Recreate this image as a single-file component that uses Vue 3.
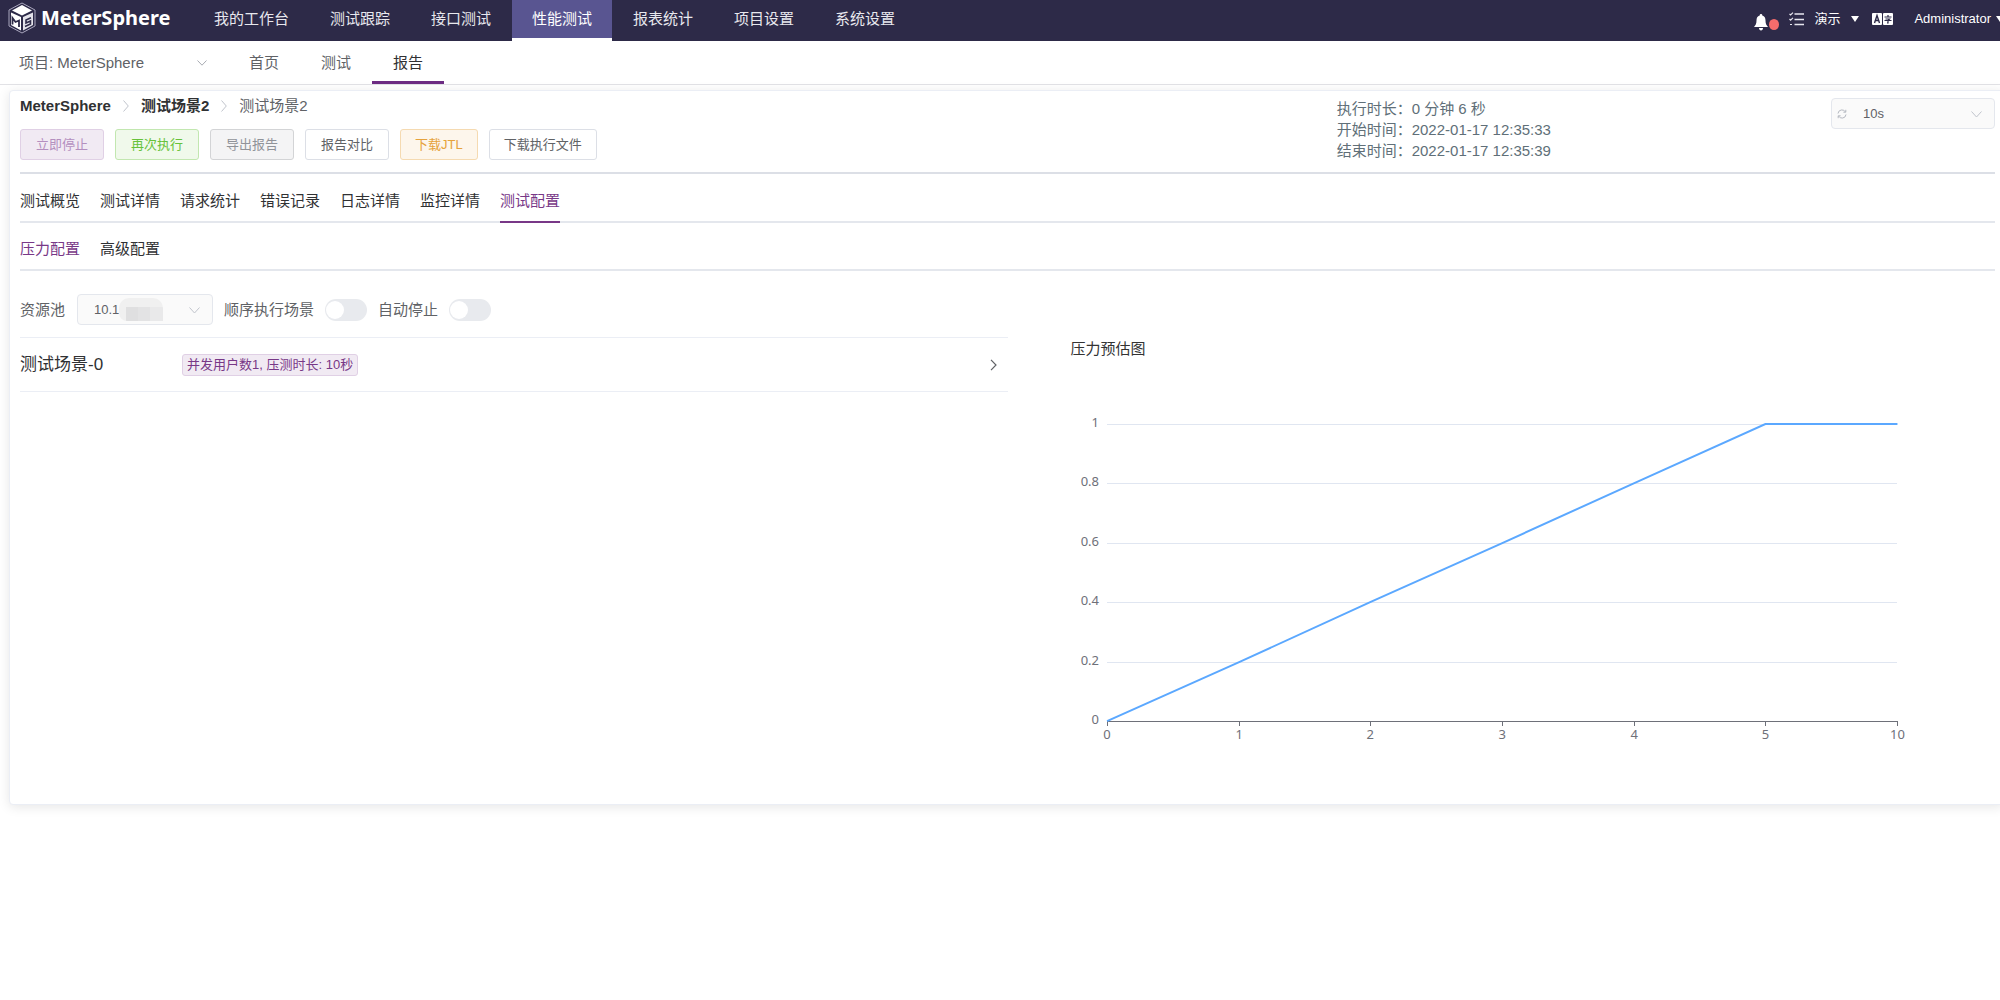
<script setup>
import { ref } from 'vue'

const menus = ['我的工作台', '测试跟踪', '接口测试', '性能测试', '报表统计', '项目设置', '系统设置']
const activeMenu = ref('性能测试')

const pages = ['首页', '测试', '报告']
const activePage = ref('报告')

const actions = [
  { label: '立即停止', kind: 'primary', disabled: true },
  { label: '再次执行', kind: 'success' },
  { label: '导出报告', kind: 'info' },
  { label: '报告对比', kind: 'plain' },
  { label: '下载JTL', kind: 'warning' },
  { label: '下载执行文件', kind: 'plain' },
]

const meta = [
  { label: '执行时长', value: '0 分钟 6 秒' },
  { label: '开始时间', value: '2022-01-17 12:35:33' },
  { label: '结束时间', value: '2022-01-17 12:35:39' },
]

const tabs = ['测试概览', '测试详情', '请求统计', '错误记录', '日志详情', '监控详情', '测试配置']
const activeTab = ref('测试配置')

const configTabs = ['压力配置', '高级配置']
const activeConfig = ref('压力配置')

const serial = ref(false)
const autoStop = ref(false)

const plot = { left: 99, right: 889, top: 52, bottom: 349 }
const xLabels = [0, 1, 2, 3, 4, 5, 10]
const yLabels = [0, 0.2, 0.4, 0.6, 0.8, 1]
const values = [0, 0.2, 0.4, 0.6, 0.8, 1, 1]
const px = (i) => Math.round(plot.left + ((plot.right - plot.left) * i) / (xLabels.length - 1))
const py = (v) => Math.round(plot.bottom - (plot.bottom - plot.top) * v)
const line = values.map((v, i) => `${px(i)},${py(v)}`).join(' ')
</script>

<template>
  <div class="app">
    <header class="header">
      <a class="brand" href="#">
        <svg class="brand-mark" viewBox="0 0 28 32" aria-hidden="true">
          <path d="M14 1 27 8v16L14 31 1 24V8z" fill="none" stroke="#a9a6bd" stroke-width="1" />
          <path d="M14 3 24 8.500 14 13.500 4 8.500z" fill="#fff" />
          <path d="M3 10.500 13 15v13.500L3 23z" fill="#fff" />
          <path d="M25 10.500 15 15v13.500L25 23z" fill="#e4e3ea" />
          <path d="M4.500 22.500v-6.500l3 4 3.500-1.500v6.500" fill="none" stroke="#2d2a48" stroke-width="1.800" />
          <path d="M23 15.800 18 18v3l4.500-2v3L17 24.500" fill="none" stroke="#2d2a48" stroke-width="1.600" />
        </svg>
        <span>MeterSphere</span>
      </a>
      <nav class="menu" aria-label="主导航">
        <a
          v-for="m in menus"
          :key="m"
          href="#"
          :class="['menu-item', { active: m === activeMenu }]"
          @click.prevent="activeMenu = m"
        >{{ m }}</a>
      </nav>
      <div class="tools">
        <button class="tool bell" aria-label="消息通知">
          <svg width="14" height="17" viewBox="0 0 14 17" aria-hidden="true">
            <path d="M7 0c.8 0 1.300.6 1.300 1.400C10.600 2 11.500 4 11.500 6.500c0 3 .8 4.500 2.500 6.500H0c1.700-2 2.500-3.500 2.500-6.500 0-2.500.9-4.500 3.200-5.100C5.700.6 6.200 0 7 0z" fill="#fff" />
            <path d="M5 14h4c0 1.500-.8 2.500-2 2.500S5 15.500 5 14z" fill="#fff" />
          </svg>
          <i class="dot"></i>
        </button>
        <button class="tool tasks" aria-label="任务列表">
          <svg width="15" height="14" viewBox="0 0 15 14" fill="none" stroke="#e6e6ee" aria-hidden="true">
            <path d="M5.500 2H15M5.500 7.500H15M5.500 12.500H15" stroke-width="1.500" />
            <path d="M.5 1.800 1.600 3 4 .6M.5 7 1.600 8.200 4 5.800M1 12.500h2" stroke-width="1.200" />
          </svg>
        </button>
        <button class="tool workspace">演示<i class="caret"></i></button>
        <button class="tool lang" aria-label="切换语言">
          <svg width="21" height="12" viewBox="0 0 21 12" aria-hidden="true">
            <rect width="10" height="12" rx="1" fill="#fff" />
            <rect x="11" width="10" height="12" rx="1" fill="#fff" />
            <path d="M2.500 10 5 2.500 7.500 10M3.500 7.500h3" fill="none" stroke="#2d2a48" stroke-width="1.400" />
            <path d="M12.500 4h7M16 2v2M13.500 6h4l-1.500 1.500V10h-1M12.500 7.500h7" fill="none" stroke="#2d2a48" stroke-width="1.200" />
          </svg>
        </button>
        <button class="tool user">Administrator<i class="caret"></i></button>
      </div>
    </header>

    <div class="subbar">
      <button class="project">
        <span>项目: MeterSphere</span>
        <svg width="10" height="6" viewBox="0 0 10 6" aria-hidden="true">
          <path d="M.5.5 5 5.200 9.500.5" fill="none" stroke="#a8abb2" />
        </svg>
      </button>
      <nav class="pages" aria-label="性能测试">
        <a
          v-for="p in pages"
          :key="p"
          href="#"
          :class="['page', { active: p === activePage }]"
          @click.prevent="activePage = p"
        >{{ p }}</a>
      </nav>
    </div>

    <main class="card">
      <section class="summary">
        <div>
          <nav class="crumbs" aria-label="面包屑">
            <a href="#">MeterSphere</a>
            <svg width="6" height="12" viewBox="0 0 6 12" aria-hidden="true"><path d="M.5.5 5.300 6 .5 11.500" fill="none" stroke="#c0c4cc" /></svg>
            <a href="#">测试场景2</a>
            <svg width="6" height="12" viewBox="0 0 6 12" aria-hidden="true"><path d="M.5.5 5.300 6 .5 11.500" fill="none" stroke="#c0c4cc" /></svg>
            <span>测试场景2</span>
          </nav>
          <div class="actions">
            <button v-for="a in actions" :key="a.label" :class="['btn', a.kind]" :disabled="a.disabled">{{ a.label }}</button>
          </div>
        </div>
        <div class="summary-side">
          <dl class="meta">
            <div v-for="m in meta" :key="m.label">
              <dt>{{ m.label }}：</dt>
              <dd>{{ m.value }}</dd>
            </div>
          </dl>
          <div class="select refresh">
            <svg class="prefix" width="10" height="10" viewBox="0 0 10 10" fill="none" stroke="#b4b8c0" aria-hidden="true">
              <path d="M1 4.500A4 4 0 0 1 8.500 3M9 5.500A4 4 0 0 1 1.500 7M8.800.8V3.200H6.400M1.200 9.200V6.800H3.600" />
            </svg>
            <select aria-label="刷新间隔"><option>10s</option></select>
            <svg class="arrow" width="11" height="7" viewBox="0 0 11 7" aria-hidden="true">
              <path d="M.5.5 5.500 6 10.500.5" fill="none" stroke="#c0c4cc" />
            </svg>
          </div>
        </div>
      </section>

      <div class="tabs main-tabs" role="tablist">
        <button
          v-for="t in tabs"
          :key="t"
          role="tab"
          :aria-selected="t === activeTab"
          :class="['tab', { active: t === activeTab }]"
          @click="activeTab = t"
        >{{ t }}</button>
      </div>
      <div class="tabs config-tabs" role="tablist">
        <button
          v-for="t in configTabs"
          :key="t"
          role="tab"
          :aria-selected="t === activeConfig"
          :class="['tab', { active: t === activeConfig }]"
          @click="activeConfig = t"
        >{{ t }}</button>
      </div>

      <form class="options" @submit.prevent>
        <label for="pool">资源池</label>
        <div class="select pool">
          <select id="pool" disabled><option>10.1</option></select>
          <span class="mask"><i></i><i></i><i></i><i></i><i></i><i></i><i></i><i></i></span>
          <svg class="arrow" width="11" height="7" viewBox="0 0 11 7" aria-hidden="true">
            <path d="M.5.5 5.500 6 10.500.5" fill="none" stroke="#c0c4cc" />
          </svg>
        </div>
        <label for="serial">顺序执行场景</label>
        <input id="serial" v-model="serial" class="switch" type="checkbox" role="switch" />
        <label for="autostop">自动停止</label>
        <input id="autostop" v-model="autoStop" class="switch" type="checkbox" role="switch" />
      </form>

      <section class="body">
        <div class="scenarios">
          <button class="scenario" aria-expanded="false">
            <span class="scenario-name">测试场景-0</span>
            <span class="tag">并发用户数1, 压测时长: 10秒</span>
            <svg width="7" height="12" viewBox="0 0 7 12" aria-hidden="true">
              <path d="M1 .8 6 6 1 11.200" fill="none" stroke="#606266" stroke-width="1.200" />
            </svg>
          </button>
        </div>
        <div class="chart">
          <h3>压力预估图</h3>
          <svg viewBox="0 0 987 432" role="img" aria-label="压力预估图">
            <g class="grid">
              <line v-for="v in yLabels.slice(1)" :key="v" :x1="plot.left" :x2="plot.right" :y1="py(v)" :y2="py(v)" />
            </g>
            <g class="axis">
              <line :x1="plot.left" :x2="plot.right" :y1="plot.bottom" :y2="plot.bottom" />
              <line v-for="(x, i) in xLabels" :key="x" :x1="px(i)" :x2="px(i)" :y1="plot.bottom" :y2="plot.bottom + 5" />
            </g>
            <g class="labels">
              <text v-for="v in yLabels" :key="v" :x="plot.left - 8" :y="py(v) + 3" text-anchor="end">{{ v }}</text>
              <text v-for="(x, i) in xLabels" :key="x" :x="px(i)" :y="plot.bottom + 18" text-anchor="middle">{{ x }}</text>
            </g>
            <polyline class="series" :points="line" />
          </svg>
        </div>
      </section>
    </main>
  </div>
</template>

<style>
body {
  margin: 0;
  background: #fff;
}
</style>

<style scoped>
.app {
  padding-bottom: 24px;
  font-family: "Liberation Sans", "Noto Sans CJK SC", sans-serif;
  font-size: 15px;
  line-height: 20px;
  color: #303133;
  overflow: hidden;
}

button,
select {
  font: inherit;
  color: inherit;
  border: 0;
  background: none;
  padding: 0;
  margin: 0;
}

button {
  cursor: pointer;
}

a {
  color: inherit;
  text-decoration: none;
}

.header {
  display: flex;
  height: 41px;
  background: #2d2a48;
  color: #fff;
  overflow: hidden;
}

.brand {
  display: flex;
  align-items: center;
  gap: 5px;
  width: 186px;
  height: 36px;
  padding-left: 8px;
  box-sizing: border-box;
  flex: none;
  font-family: "Noto Sans", sans-serif;
  font-weight: 700;
  font-size: 20px;
}

.brand-mark {
  width: 28px;
  height: 32px;
  flex: none;
}

.menu {
  display: flex;
  gap: 1px;
  margin-left: 8px;
}

.menu-item {
  height: 38px;
  line-height: 38px;
  padding: 0 20px;
  color: #e8e8ee;
  white-space: nowrap;
  border-bottom: 3px solid transparent;
}

.menu-item.active {
  background: #595591;
  border-bottom-color: #fff;
  background-clip: padding-box;
  color: #fff;
}

.tools {
  display: flex;
  align-items: center;
  height: 38px;
  margin-left: auto;
  margin-right: -4px;
  font-size: 13px;
}

.tool {
  display: flex;
  align-items: center;
  color: #fff;
  white-space: nowrap;
}

.bell {
  position: relative;
  padding-top: 6px;
  margin-right: 21px;
}

.dot {
  position: absolute;
  left: 15px;
  top: 11px;
  width: 10px;
  height: 11px;
  border-radius: 50%;
  background: #f56c6c;
}

.tasks {
  margin-right: 10px;
}

.caret {
  border: 4px solid transparent;
  border-top: 6px solid #fff;
  border-bottom: 0;
}

.workspace {
  gap: 11px;
  margin-right: 13px;
}

.lang {
  margin-right: 21px;
}

.user {
  gap: 5px;
}

.subbar {
  display: flex;
  height: 43px;
  border-bottom: 1px solid #e2e2e6;
  color: #606266;
}

.project {
  display: flex;
  align-items: center;
  justify-content: space-between;
  width: 188px;
  margin-left: 19px;
}

.pages {
  display: flex;
  margin-left: 21px;
}

.page {
  width: 72px;
  box-sizing: border-box;
  height: 43px;
  line-height: 43px;
  text-align: center;
}

.page.active {
  color: #303133;
  border-bottom: 3px solid #6c2b82;
}

.card {
  margin: 5px -4px 0 9px;
  padding: 0 8px 0 10px;
  border: 1px solid #ebeef5;
  border-radius: 4px;
  background: #fff;
  box-shadow: 0 2px 12px rgba(0, 0, 0, 0.1);
}

.summary {
  display: grid;
  grid-template-columns: 2fr 1fr;
  padding: 5px 0 11px;
  border-bottom: 2px solid #dcdfe6;
}

.crumbs {
  display: flex;
  align-items: center;
  gap: 12px;
  line-height: 20px;
  color: #606266;
}

.crumbs a {
  font-weight: 700;
  color: #303133;
}

.actions {
  display: flex;
  gap: 11px;
  margin-top: 13px;
}

.btn {
  height: 31px;
  min-width: 84px;
  padding: 0 14px;
  border: 1px solid;
  border-radius: 3px;
  font-size: 13px;
}

.btn.plain {
  color: #606266;
  border-color: #dcdfe6;
  background: #fff;
}

.btn.primary {
  color: #b48fbf;
  border-color: #e0d0e5;
  background: #f1eaf3;
  cursor: not-allowed;
}

.btn.success {
  color: #67c23a;
  border-color: #c2e7b0;
  background: #f0f9eb;
}

.btn.info {
  color: #909399;
  border-color: #d3d4d6;
  background: #f4f4f5;
}

.btn.warning {
  min-width: 0;
  color: #e6a23c;
  border-color: #f5dab1;
  background: #fdf6ec;
}

.summary-side {
  display: flex;
  justify-content: space-between;
  align-items: flex-start;
}

.meta {
  margin: 2px 0 0;
  line-height: 21px;
  color: #606f78;
}

.meta div {
  display: flex;
}

.meta dd {
  margin: 0;
}

.select {
  position: relative;
  box-sizing: border-box;
  height: 31px;
  border: 1px solid #e4e7ed;
  border-radius: 4px;
  background: #fafafa;
  font-size: 13px;
  color: #606266;
}

.select select {
  appearance: none;
  width: 100%;
  height: 100%;
  padding-left: 16px;
  opacity: 1;
  color: inherit;
}

.arrow {
  position: absolute;
  right: 12px;
  top: 12px;
  pointer-events: none;
}

.prefix {
  position: absolute;
  left: 5px;
  top: 10px;
}

.refresh {
  width: 164px;
  margin-top: 2px;
}

.refresh select {
  padding-left: 31px;
}

.tabs {
  display: flex;
  gap: 20px;
  border-bottom: 2px solid #e4e7ed;
}

.tab {
  padding-top: 6px;
  border-bottom: 2px solid transparent;
  margin-bottom: -2px;
  color: #303133;
}

.main-tabs .tab {
  height: 49px;
}

.config-tabs .tab {
  height: 48px;
}

.tab.active {
  color: #783887;
}

.main-tabs .tab.active {
  border-bottom-color: #783887;
}

.options {
  display: flex;
  align-items: center;
  padding: 23px 0 12px;
  color: #606266;
}

.pool {
  width: 136px;
  margin: 0 11px 0 12px;
}

.mask {
  position: absolute;
  left: 41px;
  top: 3px;
  width: 44px;
  height: 23px;
  display: grid;
  grid-template-columns: 7px 12px 12px 13px;
  grid-template-rows: 9px 14px;
  border-radius: 10px 10px 0 8px;
  overflow: hidden;
}

.mask i {
  background: #f0f0f0;
}

.mask i:nth-child(6) {
  background: #dfdfe0;
}

.mask i:nth-child(7) {
  background: #e3e3e4;
}

.mask i:nth-child(8) {
  background: #e9e9ea;
}

.switch {
  appearance: none;
  display: flex;
  align-items: center;
  width: 42px;
  height: 22px;
  margin: 0 11px;
  padding: 0 1px;
  box-sizing: border-box;
  border-radius: 11px;
  background: #e8eaee;
  cursor: pointer;
}

.switch::before {
  content: "";
  width: 18px;
  height: 18px;
  border-radius: 50%;
  background: #fff;
}

.switch:checked {
  justify-content: flex-end;
  background: #783887;
}

.body {
  display: grid;
  grid-template-columns: 1fr 1fr;
}

.scenario {
  display: flex;
  align-items: center;
  width: 100%;
  height: 55px;
  padding-right: 11px;
  border-top: 1px solid #ebeef5;
  border-bottom: 1px solid #ebeef5;
  text-align: left;
}

.scenario-name {
  width: 162px;
  font-size: 17px;
}

.tag {
  height: 20px;
  padding: 0 4px;
  border: 1px solid #e0d0e5;
  border-radius: 3px;
  background: #f1eaf3;
  color: #783887;
  font-size: 13px;
}

.scenario svg {
  margin-left: auto;
}

.chart h3 {
  margin: 0;
  padding: 2px 0 13px 63px;
  font-size: 15px;
  font-weight: 400;
  color: #333;
}

.chart svg {
  display: block;
  width: 100%;
}

.grid line {
  stroke: #e0e6f1;
  shape-rendering: crispEdges;
}

.axis line {
  stroke: #6e7079;
  shape-rendering: crispEdges;
}

.labels text {
  font-family: "Noto Sans", sans-serif;
  font-size: 13px;
  fill: #6e7079;
}

.series {
  fill: none;
  stroke: #5ba8ff;
  stroke-width: 2;
}
</style>
